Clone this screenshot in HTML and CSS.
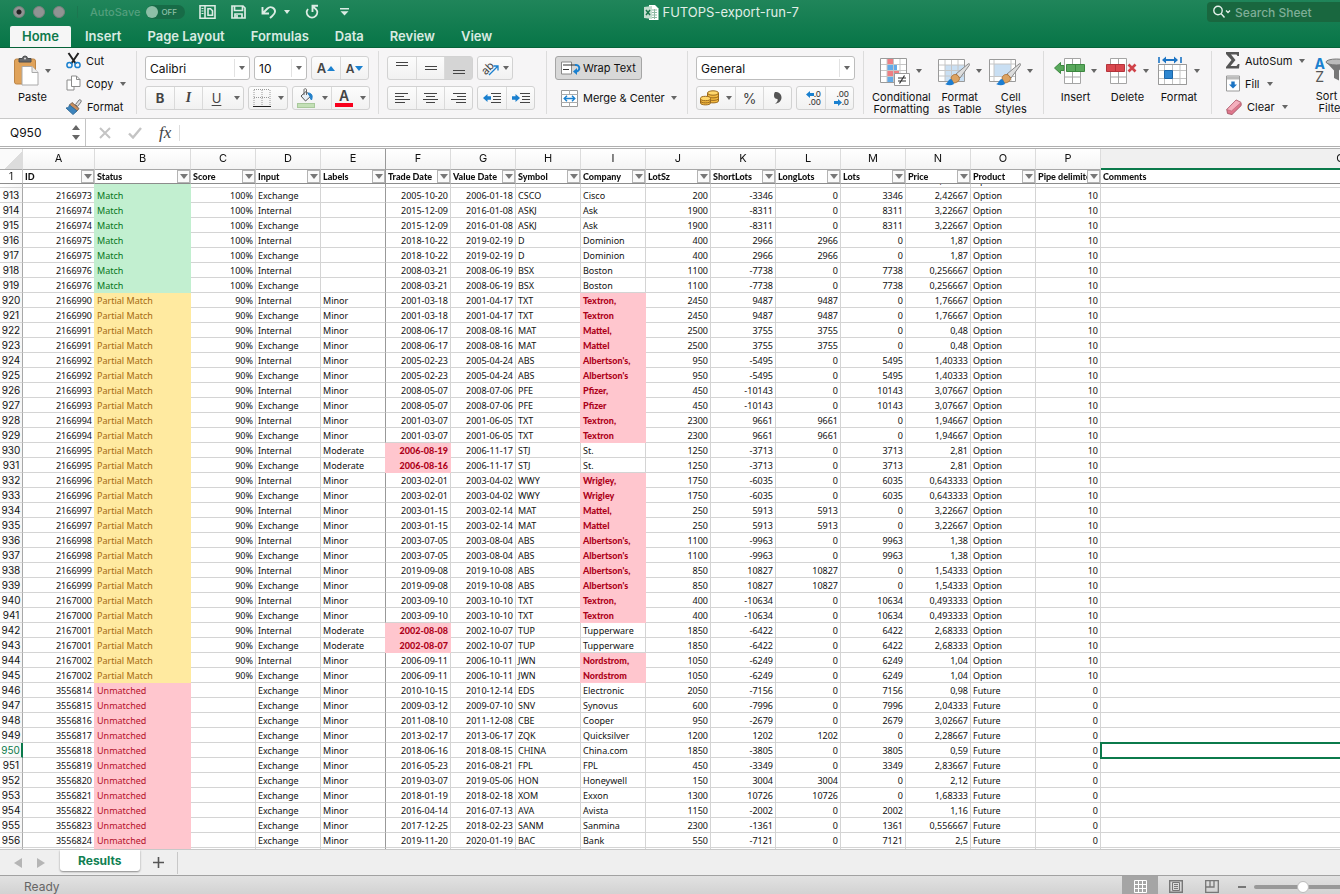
FILE: index.html
```html
<!DOCTYPE html>
<html lang="en">
<head>
    <meta charset="UTF-8">
    <meta name="viewport" content="width=device-width, initial-scale=1.0">
    <title>FUTOPS-export-run-7</title>
    <link rel="stylesheet" href="styles.css">
</head>
<body>
    <header class="titlebar">
        <div class="window-row">
            <div class="lights"><span class="light edited"></span><span class="light"></span><span class="light"></span></div>
            <label class="autosave">AutoSave <input type="checkbox" class="toggle-input"><span class="toggle"><i></i>OFF</span></label>
            <div class="quick">
                <button aria-label="Sidebar"><svg width="17" height="16" viewBox="0 0 17 16" fill="none" stroke="#dcece4" stroke-width="1.6"><path d="M1 1.800h15v12.400H1zM6 1.800v12.400M9 4.800h2.500l2 2v4.500H9z"/><path d="M2.500 4.500h2M2.500 7h2M2.500 9.500h2" stroke-width="1"/></svg></button>
                <button aria-label="Save"><svg width="15" height="16" viewBox="0 0 15 16" fill="none" stroke="#dcece4" stroke-width="1.700"><path d="M1 2h11l2 2v10H1z"/><path d="M3.500 2v4.500h8V2M4 14v-4h7v4M6 11v3"/></svg></button>
                <button class="undo" aria-label="Undo"><svg width="16" height="16" viewBox="0 0 16 16" fill="none" stroke="#dcece4" stroke-width="1.900"><path d="M1.500 3v6.500H8M2 9l4.500-4.500c3-3 8-.5 7.500 3.500-.3 2.500-2.500 3.500-5 6"/></svg><span class="caret"></span></button>
                <button aria-label="Redo"><svg width="14" height="16" viewBox="0 0 14 16" fill="none" stroke="#dcece4" stroke-width="1.900"><path d="M3 5a5.200 5.200 0 1 0 8 0M13 1.800H7.500V8M8 2.300l3.500 3.500"/></svg></button>
                <button class="customize" aria-label="Customize toolbar"><svg width="9" height="8" viewBox="0 0 9 8" fill="#dcece4"><path d="M0 0h9v1.500H0zM.5 3.200h8L4.500 7.500z"/></svg></button>
            </div>
            <div class="doc-title"><svg width="15" height="15" viewBox="0 0 15 15"><path d="M5 0h6l3.500 3.500V15H5z" fill="#fff"/><path d="M8 5h5M8 7.500h5M8 10h5M8 12.500h5M10.500 4v10" stroke="#8db9a3"/><path d="M0 2l8-1v13l-8-1z" fill="#c4ddcf"/><path d="M2 5l4 5M6 5l-4 5" stroke="#187449" stroke-width="1.500"/></svg>FUTOPS-export-run-7</div>
            <div class="search">
                <svg width="20" height="14" viewBox="0 0 20 14" fill="none" stroke="#e4f0ea" stroke-width="1.400"><circle cx="6" cy="5.500" r="4.200"/><path d="M9 8.500l3.500 4M14 5.500l2 2 2-2"/></svg>
                <input type="search" placeholder="Search Sheet" aria-label="Search Sheet">
            </div>
        </div>
        <nav class="tabs">
            <a href="#" class="active">Home</a>
            <a href="#">Insert</a>
            <a href="#">Page Layout</a>
            <a href="#">Formulas</a>
            <a href="#">Data</a>
            <a href="#">Review</a>
            <a href="#">View</a>
        </nav>
    </header>

    <section class="ribbon">
        <div class="group clipboard">
            <button class="big">
                <span class="big-top"><svg width="25" height="31" viewBox="0 0 25 31"><rect x=".5" y="4" width="21" height="25" rx="2" fill="#e0a35b" stroke="#bd8546"/><path d="M5 7V3.500h3.500a2.500 2.500 0 0 1 5 0H17V7z" fill="#66686b" stroke="#4c4e50"/><circle cx="11" cy="3.500" r="1" fill="#ddd"/><path d="M8 11.500h10l6 6V30H8z" fill="#fff" stroke="#aaa"/><path d="M18 11.500v6h6" fill="#eee" stroke="#aaa"/></svg><span class="caret"></span></span>
                Paste
            </button>
            <div class="stack">
                <button class="small"><svg width="15" height="17" viewBox="0 0 15 17" fill="none"><path d="M2.500 1l7.500 11M12.500 1L5 12" stroke="#222" stroke-width="2"/><circle cx="3.500" cy="13" r="2.600" stroke="#1a80cf" stroke-width="1.500"/><circle cx="11.500" cy="13" r="2.600" stroke="#1a80cf" stroke-width="1.500"/></svg>Cut</button>
                <button class="small"><svg width="15" height="17" viewBox="0 0 15 17" fill="#fff" stroke="#8b8b8b"><path d="M1 5h7v10H1z"/><path d="M5.500 1h5l3.500 3.500v7H5.500z"/><path d="M10.500 1v3.500H14" fill="none"/></svg>Copy<span class="caret"></span></button>
                <button class="small"><svg width="16" height="16" viewBox="0 0 16 16"><path d="M9.500 5.500L13 1c1-1 3 .5 2 2l-3.500 4.500z" fill="#ddd" stroke="#777"/><path d="M6 3.500l7 6-2 2.500-7.500-6z" fill="#c98f5e" stroke="#7b6654"/><path d="M3.500 6l7.500 6-4 3.500L0 9c2 0 3-1 3.500-3z" fill="#3d84bd" stroke="#356e9b"/></svg>Format</button>
            </div>
        </div>

        <div class="group font">
            <div class="rows">
                <div class="row">
                    <label class="combo font-name"><select aria-label="Font"><option>Calibri</option></select><span class="caret"></span></label>
                    <label class="combo font-size"><select aria-label="Font size"><option>10</option></select><span class="caret"></span></label>
                    <div class="btns"><button class="cell-btn font-grow" aria-label="Increase font size"><b>A</b><i class="up"></i></button><button class="cell-btn font-shrink" aria-label="Decrease font size"><b>A</b><i class="down"></i></button></div>
                </div>
                <div class="row">
                    <div class="btns"><button class="cell-btn bold">B</button><button class="cell-btn italic">I</button><button class="cell-btn underline">U</button><button class="drop" aria-label="Underline style"><span class="caret"></span></button></div>
                    <div class="btns narrow"><button class="cell-btn" aria-label="Borders"><svg width="18" height="18" viewBox="0 0 18 18" fill="none"><path d="M1 .5h16M1 8.500h16M1 1v15M9 1v15M17 1v15" stroke="#999" stroke-dasharray="1 1"/><path d="M0 17.500h18" stroke="#222"/></svg></button><button class="drop" aria-label="Border style"><span class="caret"></span></button></div>
                    <div class="btns narrow"><button class="cell-btn" aria-label="Fill color"><svg width="20" height="20" viewBox="0 0 20 20"><path d="M5 8l5-4.500L15 8l-5.500 5z" fill="#e8eff5" stroke="#555"/><path d="M8 7V1.500c0-1 2.500-1 2.500 0V7" fill="none" stroke="#666"/><path d="M12 5c4 0 5 3 3.500 7-1.500-1-1-4-2.500-5z" fill="#2280ca" stroke="#2280ca"/><rect x="1.500" y="15.500" width="17" height="4" fill="#c3e0b6" stroke="#a9c99c"/></svg></button><button class="drop" aria-label="Fill colors"><span class="caret"></span></button><button class="cell-btn font-color" aria-label="Font color">A</button><button class="drop" aria-label="Font colors"><span class="caret"></span></button></div>
                </div>
            </div>
        </div>

        <div class="group alignment">
            <div class="rows">
                <div class="row">
                    <div class="btns">
                        <button class="cell-btn" aria-label="Top align"><svg width="12" height="16" viewBox="0 0 12 16" stroke="#444"><path d="M0 2.500h12M0 5.500h12"/></svg></button>
                        <button class="cell-btn" aria-label="Middle align"><svg width="12" height="16" viewBox="0 0 12 16" stroke="#444"><path d="M0 6.500h12M0 9.500h12"/></svg></button>
                        <button class="cell-btn pressed" aria-label="Bottom align"><svg width="12" height="16" viewBox="0 0 12 16" stroke="#444"><path d="M0 10.500h12M0 13.500h12"/></svg></button>
                    </div>
                    <div class="btns"><button class="cell-btn orient" aria-label="Orientation"><span class="ab">ab</span><svg width="11" height="11" viewBox="0 0 11 11" fill="none" stroke="#1a80cf" stroke-width="1.300"><path d="M1 10l9-9M5.500 1H10v4.500"/></svg><span class="caret"></span></button></div>
                </div>
                <div class="row">
                    <div class="btns">
                        <button class="cell-btn" aria-label="Align left"><svg width="15" height="13" viewBox="0 0 15 13" stroke="#444"><path d="M0 1.500h13M0 4.500h9M0 7.500h15M0 10.500h10"/></svg></button>
                        <button class="cell-btn" aria-label="Center"><svg width="15" height="13" viewBox="0 0 15 13" stroke="#444"><path d="M1 1.500h13M3 4.500h9M0 7.500h15M3 10.500h9"/></svg></button>
                        <button class="cell-btn" aria-label="Align right"><svg width="15" height="13" viewBox="0 0 15 13" stroke="#444"><path d="M2 1.500h13M6 4.500h9M0 7.500h15M5 10.500h10"/></svg></button>
                    </div>
                    <div class="btns">
                        <button class="cell-btn" aria-label="Decrease indent"><svg width="18" height="13" viewBox="0 0 18 13"><path d="M8 1.500h10M10 4.500h8M10 7.500h8M8 10.500h10" stroke="#444"/><path d="M0 6l4.500-4v2.300H8v3.400H4.500V10z" fill="#1a80cf"/></svg></button>
                        <button class="cell-btn" aria-label="Increase indent"><svg width="18" height="13" viewBox="0 0 18 13"><path d="M8 1.500h10M10 4.500h8M10 7.500h8M8 10.500h10" stroke="#444"/><path d="M8 6L3.500 2v2.300H0v3.400h3.500V10z" fill="#1a80cf"/></svg></button>
                    </div>
                </div>
            </div>
        </div>

        <div class="group wrapping">
            <div class="rows">
                <div class="row"><button class="wide pressed-box"><svg width="20" height="14" viewBox="0 0 20 14" fill="none"><path d="M.5 1h10v12H.5z" fill="#fff" stroke="#888"/><path d="M2 4h13M2 8.500h6" stroke="#333"/><path d="M14 4c5-1 6 6 1 6.500" stroke="#1a80cf" stroke-width="2"/><path d="M16 7v7l-4-3.500z" fill="#1a80cf"/></svg>Wrap Text</button></div>
                <div class="row"><button class="wide"><svg width="17" height="17" viewBox="0 0 17 17" fill="none"><path d="M.5.5h16v16H.5z" fill="#fff" stroke="#999"/><path d="M0 4.500h17M0 12.500h17M8.500 0v4M8.500 13v4" stroke="#aaa"/><path d="M3 8.500h11M6 5.800L3.200 8.500 6 11.200M11 5.800l2.800 2.700-2.800 2.700" stroke="#1a80cf" stroke-width="1.400"/></svg>Merge &amp; Center<span class="caret"></span></button></div>
            </div>
        </div>

        <div class="group number">
            <div class="rows">
                <div class="row"><label class="combo number-format"><select aria-label="Number format"><option>General</option></select><span class="caret"></span></label></div>
                <div class="row">
                    <div class="btns"><button class="cell-btn coins" aria-label="Currency"><svg width="19" height="16" viewBox="0 0 19 16" fill="#f3b93e" stroke="#9b6a1d"><path d="M7.500 3v8c0 2.500 11 2.500 11 0V3"/><path d="M7.500 6c0 2.500 11 2.500 11 0M7.500 8.500c0 2.500 11 2.500 11 0" fill="none"/><ellipse cx="13" cy="3" rx="5.500" ry="2.200" fill="#ffd76c"/><path d="M.5 8.500v4.500c0 2.500 10 2.500 10 0V8.500"/><path d="M.5 11c0 2.500 10 2.500 10 0" fill="none"/><ellipse cx="5.500" cy="8.500" rx="5" ry="2.200" fill="#ffd76c"/></svg></button><button class="drop" aria-label="Currencies"><span class="caret"></span></button><button class="cell-btn percent">%</button><button class="cell-btn" aria-label="Comma style"><svg width="8" height="12" viewBox="0 0 8 12" fill="#555"><path d="M1 0c4 0 6.500 2 6.500 5.500C7.500 9 5 11 1 12c2.500-2 3-3.500 2.500-5C1 7 0 5.500 0 3.500 0 2 .3 1 1 0z"/></svg></button></div>
                    <div class="btns">
                        <button class="cell-btn decimals" aria-label="Increase decimal"><span><svg width="8" height="7" viewBox="0 0 8 7"><path d="M0 3.500L4 0v2h4v3H4v2z" fill="#1a80cf"/></svg>.0</span><span>.00</span></button>
                        <button class="cell-btn decimals" aria-label="Decrease decimal"><span>.00</span><span><svg width="8" height="7" viewBox="0 0 8 7"><path d="M8 3.500L4 0v2H0v3h4v2z" fill="#1a80cf"/></svg>.0</span></button>
                    </div>
                </div>
            </div>
        </div>

        <div class="group styles">
            <button class="big">
                <span class="big-top"><svg width="30" height="31" viewBox="0 0 30 31"><path d="M.5 3.500h26v24H.5z" fill="#fff"/><path d="M7 4h6v5H7zM7 15h12v6H7z" fill="#ee7f83"/><path d="M7 9h10v6H7zM7 21h6v6H7z" fill="#64abe8"/><path d="M.5 9.500h26M.5 15.500h26M.5 21.500h26M7 3.500v24M13.500 3.500v24M20 3.500v24" stroke="#c6c6c6" fill="none"/><path d="M.5 3.500h26v24H.5z" fill="none" stroke="#9a9a9a"/><path d="M14.500 18.500h15v12h-15z" fill="#fff" stroke="#999"/><path d="M18 23h8M18 26h8M24.500 20.500l-5 8" stroke="#333" stroke-width="1.200"/></svg><span class="caret"></span></span>
                Conditional<br>Formatting
            </button>
            <button class="big">
                <span class="big-top"><svg width="32" height="31" viewBox="0 0 32 31"><path d="M.5 4.500h26v22H.5z" fill="#fff"/><path d="M7 10h20v17H7z" fill="#c9dff3"/><path d="M.5 10h26M.5 15.500h26M.5 21h26M7 4.500v22M13.500 4.500v22M20 4.500v22" stroke="#c6c6c6" fill="none"/><path d="M.5 4.500h26v22H.5z" fill="none" stroke="#9a9a9a"/><path d="M18 19L30 9c1.500-.8 2 0 1.400 1.200L22 23z" fill="#ddd" stroke="#888"/><path d="M13 23c1-4 6-5 8-1s-3 6-6 6z" fill="#dca362" stroke="#b0763a"/><path d="M7 29c3-.5 3-5 6-5 1 1 2 2 3 5-3 2-6 1.500-9 0z" fill="#1c7dd1"/></svg><span class="caret"></span></span>
                Format<br>as Table
            </button>
            <button class="big">
                <span class="big-top"><svg width="32" height="31" viewBox="0 0 32 31"><path d="M.5 4.500h26v22H.5z" fill="#fff"/><path d="M5 9h17v12H5z" fill="#c9dff3"/><path d="M.5 9h26M.5 21.500h26M5 4.500v22M22 4.500v22" stroke="#c6c6c6" fill="none"/><path d="M.5 4.500h26v22H.5z" fill="none" stroke="#9a9a9a"/><path d="M18 19L30 9c1.500-.8 2 0 1.400 1.200L22 23z" fill="#ddd" stroke="#888"/><path d="M13 23c1-4 6-5 8-1s-3 6-6 6z" fill="#dca362" stroke="#b0763a"/><path d="M7 29c3-.5 3-5 6-5 1 1 2 2 3 5-3 2-6 1.500-9 0z" fill="#1c7dd1"/></svg><span class="caret"></span></span>
                Cell<br>Styles
            </button>
        </div>

        <div class="group cells">
            <button class="big">
                <span class="big-top"><svg width="31" height="31" viewBox="0 0 31 31"><path d="M10.500 3.500h16v25h-16zM10.500 22h16M18.500 3.500v25" fill="#fff" stroke="#a5a5a5"/><path d="M12.500 9.500h18v7h-18z" fill="#59a85c" stroke="#3c8840"/><path d="M21.500 10v7" stroke="#3c8840"/><path d="M.5 13l6-5.500v3H10v5H6.500v3z" fill="#59a85c" stroke="#3c8840"/></svg><span class="caret"></span></span>
                Insert
            </button>
            <button class="big">
                <span class="big-top"><svg width="31" height="31" viewBox="0 0 31 31"><path d="M4.500 3.500h16v25h-16zM4.500 22h16M12.500 3.500v25" fill="#fff" stroke="#a5a5a5"/><path d="M.5 9.500h18v7H.5z" fill="#d9474e" stroke="#b5343b"/><path d="M9.500 10v7" stroke="#b5343b"/><path d="M22.500 9.500l7 7M29.500 9.500l-7 7" stroke="#d04249" stroke-width="2.600"/></svg><span class="caret"></span></span>
                Delete
            </button>
            <button class="big">
                <span class="big-top"><svg width="30" height="31" viewBox="0 0 30 31"><path d="M.5 9.500h28v20H.5zM.5 15.500h28M.5 23.500h28M6.500 9.500v20M14.500 9.500v20M22 9.500v20" fill="#fff" stroke="#c3c3c3"/><path d="M.5 9.500h28v20H.5z" fill="none" stroke="#999"/><path d="M6.500 15.500h8v8h-8z" fill="#2e86d0" stroke="#1c66a8"/><path d="M1 2v6M23 2v6" stroke="#1c74c4" stroke-width="1.600"/><path d="M6 5h12" stroke="#1c74c4" stroke-width="2"/><path d="M4 5l4-3.500v7zM20 5l-4-3.500v7z" fill="#1c74c4"/></svg><span class="caret"></span></span>
                Format
            </button>
        </div>

        <div class="group editing">
            <div class="stack">
                <button class="small"><svg width="14" height="17" viewBox="0 0 14 17"><path d="M0 0h13v4h-1.500L10.500 2.500H5l4.500 5.500L4.500 14h6l1.500-2h1.500l-.5 4.500H0V15l5.500-7L0 2z" fill="#555"/></svg>AutoSum<span class="caret"></span></button>
                <button class="small"><svg width="14" height="17" viewBox="0 0 14 17"><path d="M.5 1h13v15H.5z" fill="#fff" stroke="#999"/><path d="M1 1.500h12v3H1z" fill="#bbb"/><path d="M7 13.500l-4-4h2.300v-3h3.400v3H11z" fill="#1c74c4"/></svg>Fill<span class="caret"></span></button>
                <button class="small"><svg width="16" height="16" viewBox="0 0 16 16"><path d="M.8 10.500L10 1l5 2.500.2 3L6 15.500l-4.500-1z" fill="#e0768c" stroke="#a85a6a"/><path d="M.8 10.500L10 1l5 2.500L5.500 12z" fill="#f5afbd" stroke="#b96a79" stroke-width=".7"/></svg>Clear<span class="caret"></span></button>
            </div>
            <button class="big sort">
                <span class="big-top"><span class="az"><b>A</b>Z</span><svg width="24" height="24" viewBox="0 0 24 24"><path d="M1 4l8 8.500V20l5 2.500v-10L22 4z" fill="#777"/><ellipse cx="11.500" cy="4" rx="10.500" ry="3" fill="#bbb" stroke="#777"/></svg></span>
                Sort &amp;<br>Filter
            </button>
        </div>
    </section>

    <section class="formula-bar">
        <div class="name-box"><input type="text" value="Q950" aria-label="Name box"><span class="stepper"><i class="up"></i><i class="down"></i></span></div>
        <button aria-label="Cancel"><svg width="12" height="12" viewBox="0 0 12 12" fill="none" stroke="#c4c4c4" stroke-width="2"><path d="M1 1l10 10M11 1L1 11"/></svg></button>
        <button aria-label="Enter"><svg width="14" height="12" viewBox="0 0 14 12" fill="none" stroke="#c4c4c4" stroke-width="2.400"><path d="M1 6.500l4 4L13 1"/></svg></button>
        <button class="fx" aria-label="Insert function">fx</button>
        <input class="formula" type="text" aria-label="Formula">
    </section>

    <main class="sheet" id="sheet">
        <table>
            <colgroup><col class="c-num"><col class="c-id"><col class="c-status"><col span="14"><col class="c-comments"></colgroup>
            <thead>
                <tr class="letters" id="letters"></tr>
                <tr class="names" id="names"></tr>
            </thead>
            <tbody id="rows"></tbody>
        </table>
    </main>

    <nav class="sheet-tabs">
        <button aria-label="Previous sheet"><svg width="8" height="10" viewBox="0 0 8 10" fill="#b5b5b5"><path d="M8 0v10L0 5z"/></svg></button>
        <button aria-label="Next sheet"><svg width="8" height="10" viewBox="0 0 8 10" fill="#b5b5b5"><path d="M0 0v10l8-5z"/></svg></button>
        <a href="#" class="sheet-tab">Results</a>
        <button class="add" aria-label="Add sheet"><svg width="11" height="11" viewBox="0 0 11 11" stroke="#555" stroke-width="1.600"><path d="M5.500 0v11M0 5.500h11"/></svg></button>
    </nav>

    <footer class="status-bar">
        <span class="ready">Ready</span>
        <button class="view on" aria-label="Normal view"><svg width="13" height="13" viewBox="0 0 13 13" fill="none" stroke="#fff"><path d="M.5.500h12v12H.5zM0 4.500h13M0 8.500h13M4.500 0v13M8.500 0v13"/></svg></button>
        <button class="view" aria-label="Page layout view"><svg width="14" height="13" viewBox="0 0 14 13" fill="none" stroke="#777"><path d="M.7.700h12.600v11.600H.7z" stroke-width="1.400"/><path d="M3.500 2.500h7v8h-7zM5 4.500h4M5 6.500h4M5 8.500h4"/></svg></button>
        <button class="view" aria-label="Page break view"><svg width="14" height="13" viewBox="0 0 14 13" fill="none" stroke="#777" stroke-width="1.300"><path d="M.7.700h12.600v11.600H.7zM1 7h8V1M5 1v6"/></svg></button>
        <button class="minus" aria-label="Zoom out"></button>
        <input type="range" class="zoom" min="0" max="100" value="50" aria-label="Zoom">
    </footer>

    <script src="script.js"></script>
</body>
</html>
```
FILE: styles.css
```css
* {
    box-sizing: border-box;
}

body {
    margin: 0;
    height: 100vh;
    display: flex;
    flex-direction: column;
    overflow: hidden;
    font-family: Inter, sans-serif;
    font-size: 11px;
    color: #111;
    background: #fff;
}

button, input, select {
    font: inherit;
    color: inherit;
    border: none;
    background: none;
    padding: 0;
    margin: 0;
    outline: none;
}

a {
    text-decoration: none;
}

svg {
    display: block;
    flex: none;
}

.caret {
    flex: none;
    border: 3px solid transparent;
    border-top: 4px solid #666;
    border-bottom: none;
}

.up, .down {
    border: 4px solid transparent;
}

.up {
    border-top: none;
    border-bottom: 5px solid #666;
}

.down {
    border-bottom: none;
    border-top: 5px solid #666;
}

/* title bar */
.titlebar {
    flex: none;
    background: linear-gradient(#20855a, #077547);
    border-bottom: 1px solid #066339;
    color: #e0eee7;
}

.window-row {
    display: flex;
    align-items: center;
    height: 24px;
}

.lights {
    display: flex;
    gap: 8px;
    padding: 0 12px 0 13px;
    border-right: 1px solid #1c7650;
}

.light {
    width: 12px;
    height: 12px;
    border-radius: 50%;
    background: #919493;
    border: 1px solid #7c7f7e;
}

.edited {
    background: radial-gradient(#222 0 2px, #919493 3px);
}

.autosave {
    display: flex;
    align-items: center;
    gap: 6px;
    padding-left: 12px;
    color: #539f7d;
    font-size: 11px;
    font-weight: 500;
}

.toggle-input {
    position: absolute;
    opacity: 0;
}

.toggle {
    display: flex;
    align-items: center;
    gap: 3px;
    width: 39px;
    height: 14px;
    border-radius: 7px;
    background: #176b47;
    color: #8fc0a9;
    font-size: 8px;
}

.toggle i {
    width: 12px;
    height: 12px;
    border-radius: 50%;
    background: #8dbfa7;
}

.quick {
    display: flex;
    align-items: center;
    gap: 15px;
    padding-left: 14px;
}

.undo {
    display: flex;
    align-items: center;
    gap: 7px;
}

.quick .caret {
    border-top-color: #dcece4;
}

.customize {
    padding-left: 6px;
}

.doc-title {
    flex: 1;
    display: flex;
    align-items: center;
    justify-content: center;
    gap: 4px;
    padding-right: 114px;
    font-size: 13px;
}

.search {
    display: flex;
    align-items: center;
    gap: 3px;
    width: 133px;
    height: 20px;
    padding-left: 5px;
    border-radius: 4px 0 0 4px;
    background: #19673f;
}

.search input {
    width: 100px;
    font-size: 12px;
    font-weight: 500;
}

.search input::placeholder {
    color: #7fae97;
}

.tabs {
    display: flex;
    gap: 2px;
    padding: 2px 10px 0;
}

.tabs a {
    padding: 0 12px;
    font-size: 13px;
    line-height: 21px;
    font-weight: 600;
    color: #d9ebe2;
}

.tabs .active {
    background: #f6f6f6;
    color: #0e7a4b;
    border-radius: 2px 2px 0 0;
}

/* ribbon */
.ribbon {
    flex: none;
    display: flex;
    height: 71px;
    overflow: hidden;
    padding: 3px 0 4px;
    background: #f6f5f6;
    border-bottom: 1px solid #c8c8c8;
}

.group {
    flex: none;
    display: flex;
    padding: 5px 8px 0;
    border-right: 1px solid #dcdcdc;
}

.rows {
    display: flex;
    flex-direction: column;
    gap: 6px;
}

.row, .btns {
    display: flex;
}

.row {
    gap: 4px;
}

.btns {
    height: 24px;
    border: 1px solid #d2d2d2;
    border-radius: 3px;
    background: linear-gradient(#fcfcfc, #f1f1f1);
}

.cell-btn {
    display: flex;
    align-items: center;
    justify-content: center;
    width: 28px;
    color: #444;
}

.narrow .cell-btn, .coins {
    width: 25px;
}

.cell-btn + .cell-btn, .drop + .cell-btn {
    border-left: 1px solid #dadada;
}

.drop {
    display: flex;
    align-items: center;
    justify-content: center;
    width: 13px;
}

.combo {
    display: flex;
    align-items: center;
    height: 24px;
    padding-right: 4px;
    background: #fff;
    border: 1px solid #bdbdbd;
    border-radius: 3px;
}

.combo select {
    appearance: none;
    flex: 1;
    min-width: 0;
    height: 18px;
    margin-right: 4px;
    padding-left: 4px;
    border-right: 1px solid #e2e2e2;
    font-size: 12px;
}

.font-name {
    width: 105px;
}

.font-size {
    width: 53px;
}

.number-format {
    width: 159px;
}

.font-grow, .font-shrink {
    gap: 1px;
    font-size: 13px;
}

.font-shrink {
    font-size: 12px;
}

.font-grow b, .font-shrink b {
    font-weight: 600;
}

.font-grow .up {
    border-bottom-color: #1a80cf;
}

.font-shrink .down {
    border-top-color: #1a80cf;
}

.bold {
    font-size: 13px;
    font-weight: 700;
}

.italic {
    font: italic bold 14px "Liberation Serif", serif;
}

.underline {
    font-size: 13px;
    text-decoration: underline;
    text-underline-offset: 2px;
}

.font-color {
    font-size: 14px;
    line-height: 14px;
    font-weight: 600;
    background: linear-gradient(#f8001c, #f8001c) center 16px / 18px 4px no-repeat;
    padding-bottom: 5px;
}

.pressed {
    background: #d5d5d5;
}

.orient {
    width: 34px;
}

.ab {
    transform: rotate(-45deg);
    font-size: 11px;
}

.orient svg {
    margin: 5px 4px 0 -6px;
}

.wide {
    display: flex;
    align-items: center;
    gap: 5px;
    height: 24px;
    padding: 0 5px;
    border: 1px solid transparent;
    border-radius: 3px;
    white-space: nowrap;
}

.wide .caret {
    margin-left: 1px;
}

.pressed-box {
    gap: 2px;
    background: #d8d8d8;
    border-color: #a5a5a5;
}

.percent {
    font-size: 14px;
}

.decimals {
    flex-direction: column;
    align-items: flex-end;
    padding-right: 4px;
    font-size: 8px;
    line-height: 8px;
    font-weight: 500;
}

.decimals span {
    display: flex;
    align-items: center;
}

.big {
    display: flex;
    flex-direction: column;
    align-items: center;
    line-height: 12px;
    text-align: center;
    padding-top: 4px;
}

.big-top {
    display: flex;
    align-items: center;
    gap: 6px;
    height: 31px;
    margin-bottom: 5px;
}

.stack {
    display: flex;
    flex-direction: column;
    margin-top: -2px;
}

.small {
    flex: none;
    display: flex;
    align-items: center;
    gap: 5px;
    height: 23px;
}

.small .caret {
    margin-left: 2px;
}

.clipboard {
    width: 137px;
    gap: 15px;
    padding: 0 0 0 14px;
}

.alignment {
    width: 168px;
}

.wrapping {
    width: 141px;
}

.number {
    width: 176px;
}

.styles {
    width: 180px;
    gap: 7px;
    padding: 0 0 0 8px;
}

.cells {
    width: 168px;
    gap: 9px;
    padding: 0 0 0 10px;
}

.editing {
    gap: 9px;
    padding: 0 0 0 14px;
    border: none;
}

.sort .big-top {
    gap: 0;
}

.az {
    display: flex;
    flex-direction: column;
    font-size: 14px;
    line-height: 13px;
    color: #555;
}

.az b {
    color: #1a80cf;
}

/* formula bar */
.formula-bar {
    flex: none;
    display: flex;
    align-items: center;
    height: 30px;
    border-bottom: 3px double #b0b0b0;
}

.name-box {
    display: flex;
    align-items: center;
    width: 86px;
    height: 100%;
    padding: 0 5px 0 10px;
    margin-right: 13px;
    border-right: 1px solid #c4c4c4;
}

.name-box input {
    flex: 1;
    min-width: 0;
    font-size: 12px;
}

.stepper {
    display: flex;
    flex-direction: column;
    gap: 5px;
}

.formula-bar button {
    margin-right: 17px;
}

.formula-bar .fx {
    font: italic 17px "Liberation Serif", serif;
    color: #444;
    margin-right: 8px;
}

.formula {
    flex: 1;
    height: 16px;
    border-left: 1px solid #ddd;
}

/* sheet */
.sheet {
    flex: 1;
    min-height: 0;
    overflow: hidden;
    font-family: "Noto Sans", sans-serif;
    font-size: 9px;
}

.sheet table {
    table-layout: fixed;
    width: 1581px;
    border-collapse: separate;
    border-spacing: 0;
}

.c-num {
    width: 23px;
}

.c-id {
    width: 72px;
}

.c-status {
    width: 96px;
}

.c-comments {
    width: 480px;
}

.sheet thead {
    position: sticky;
    top: 0;
    z-index: 2;
}

.sheet th, .sheet td {
    height: 15px;
    padding: 1px 2px 0;
    overflow: hidden;
    white-space: nowrap;
    line-height: 13px;
    border-right: 1px solid #d4d4d4;
    border-bottom: 1px solid #d4d4d4;
}

.sheet .letters th {
    height: 21px;
    padding: 0 0 2px;
    background: linear-gradient(#fff, #f4f4f4);
    border-color: #dcdcdc;
    border-bottom-color: #a8a8a8;
    font: 11px Inter, sans-serif;
    text-align: center;
}

.sheet .letters .active-col {
    background: #f0f0f0;
    border-bottom: 2px solid #0b7a4b;
}

.sheet .letters th:first-child {
    background: linear-gradient(135deg, #fafafa 58%, #dcdcdc 58%);
}

.sheet .names th {
    height: 14px;
    line-height: 13px;
    background: #fff;
    border-color: #c4c4c4;
    border-bottom-color: #8c8c8c;
    text-align: left;
    font-family: Lato, sans-serif;
    font-size: 9px;
    font-weight: 900;
    padding: 0 0 0 2px;
}

.filter {
    display: flex;
    align-items: center;
    height: 13px;
}

.filter span {
    flex: 1;
    overflow: hidden;
}

.filter button {
    display: flex;
    align-items: center;
    justify-content: center;
    width: 13px;
    height: 13px;
    background: #fafafa;
    border: 1px solid #b4b4b4;
}

.filter .caret {
    border-width: 5px 4px 0;
    border-top-color: #777;
}

.sheet .rownum {
    padding: 0;
    font: 10px Inter, sans-serif;
    line-height: 14px;
    text-align: center;
    background: linear-gradient(90deg, #fff, #f6f6f6);
    border-right-color: #a8a8a8;
}

.sheet .names .rownum {
    line-height: 13px;
    text-align: center;
    font-family: Inter, sans-serif;
    font-size: 10px;
    font-weight: 400;
    padding: 0;
}

.sheet tr > :nth-child(6) {
    border-right-color: #999;
}

.sheet .num {
    text-align: right;
}

.sheet .match {
    background: #c2efd0;
    color: #067620;
    border-color: #c2efd0;
    box-shadow: -1px 0 #c2efd0;
}

.sheet .partial {
    background: #ffeaa0;
    color: #a5690f;
    border-color: #ffeaa0;
    box-shadow: -1px 0 #ffeaa0;
}

.sheet .unmatched, .sheet .diff {
    background: #ffc6ce;
    color: #b5122b;
    border-color: #ffc6ce;
    box-shadow: -1px 0 #ffc6ce;
}

.sheet .diff {
    color: #ad0018;
    font-family: Lato, sans-serif;
    font-weight: 900;
}

.sheet .selected {
    position: relative;
    outline: 2px solid #0b7a4b;
    outline-offset: -1px;
}

.sheet .current {
    color: #0b7a4b;
    border-right: 2px solid #0b7a4b;
}

/* sheet tabs */
.sheet-tabs {
    flex: none;
    display: flex;
    align-items: center;
    height: 26px;
    padding-left: 14px;
    background: #efefef;
    border-top: 1px solid #c8c8c8;
}

.sheet-tabs button {
    margin-right: 15px;
}

.sheet-tab {
    align-self: flex-start;
    padding: 0 18px;
    background: #fff;
    border-radius: 0 0 3px 3px;
    box-shadow: 0 1px 2px #888;
    color: #108052;
    font-size: 12px;
    font-weight: 700;
    line-height: 21px;
}

.sheet-tabs .add {
    height: 22px;
    margin: 0;
    padding: 0 13px;
    border-right: 1px solid #c8c8c8;
}

/* status bar */
.status-bar {
    flex: none;
    display: flex;
    align-items: stretch;
    height: 19px;
    border-top: 1px solid #a2a2a2;
    background: linear-gradient(#e2e2e2, #d2d2d2);
    overflow: hidden;
}

.ready {
    flex: 1;
    padding-left: 24px;
    font-size: 12px;
    line-height: 22px;
    color: #666;
}

.view {
    display: flex;
    justify-content: center;
    width: 36px;
    padding-top: 4px;
}

.on {
    background: #a5a5a5;
}

.minus {
    width: 8px;
    height: 2px;
    margin: 10px 8px 0 8px;
    background: #777;
}

.zoom {
    appearance: none;
    width: 98px;
    height: 4px;
    margin: 9px -12px 0 0;
    border-radius: 2px;
    background: #999;
}

.zoom::-webkit-slider-thumb {
    appearance: none;
    width: 12px;
    height: 12px;
    border-radius: 50%;
    background: #fff;
    border: 1px solid #bbb;
}
```
FILE: script.js
```js
const columns = ['ID', 'Status', 'Score', 'Input', 'Labels', 'Trade Date', 'Value Date', 'Symbol', 'Company',
    'LotSz', 'ShortLots', 'LongLots', 'Lots', 'Price', 'Product', 'Pipe delimited', 'Comments'];

// id | status | input | label | trade | value | symbol | company | lot size | short | long | lots | price
const data = `
2166973|M|I||2005-10-20|2006-01-18|CSCO|Cisco|200|-3346|0|3346|2,42667
2166973|M|E||2005-10-20|2006-01-18|CSCO|Cisco|200|-3346|0|3346|2,42667
2166974|M|I||2015-12-09|2016-01-08|ASKJ|Ask|1900|-8311|0|8311|3,22667
2166974|M|E||2015-12-09|2016-01-08|ASKJ|Ask|1900|-8311|0|8311|3,22667
2166975|M|I||2018-10-22|2019-02-19|D|Dominion|400|2966|2966|0|1,87
2166975|M|E||2018-10-22|2019-02-19|D|Dominion|400|2966|2966|0|1,87
2166976|M|I||2008-03-21|2008-06-19|BSX|Boston|1100|-7738|0|7738|0,256667
2166976|M|E||2008-03-21|2008-06-19|BSX|Boston|1100|-7738|0|7738|0,256667
2166990|P|I|Minor|2001-03-18|2001-04-17|TXT|Textron,|2450|9487|9487|0|1,76667
2166990|P|E|Minor|2001-03-18|2001-04-17|TXT|Textron|2450|9487|9487|0|1,76667
2166991|P|I|Minor|2008-06-17|2008-08-16|MAT|Mattel,|2500|3755|3755|0|0,48
2166991|P|E|Minor|2008-06-17|2008-08-16|MAT|Mattel|2500|3755|3755|0|0,48
2166992|P|I|Minor|2005-02-23|2005-04-24|ABS|Albertson's,|950|-5495|0|5495|1,40333
2166992|P|E|Minor|2005-02-23|2005-04-24|ABS|Albertson's|950|-5495|0|5495|1,40333
2166993|P|I|Minor|2008-05-07|2008-07-06|PFE|Pfizer,|450|-10143|0|10143|3,07667
2166993|P|E|Minor|2008-05-07|2008-07-06|PFE|Pfizer|450|-10143|0|10143|3,07667
2166994|P|I|Minor|2001-03-07|2001-06-05|TXT|Textron,|2300|9661|9661|0|1,94667
2166994|P|E|Minor|2001-03-07|2001-06-05|TXT|Textron|2300|9661|9661|0|1,94667
2166995|P|I|Moderate|2006-08-19|2006-11-17|STJ|St.|1250|-3713|0|3713|2,81
2166995|P|E|Moderate|2006-08-16|2006-11-17|STJ|St.|1250|-3713|0|3713|2,81
2166996|P|I|Minor|2003-02-01|2003-04-02|WWY|Wrigley,|1750|-6035|0|6035|0,643333
2166996|P|E|Minor|2003-02-01|2003-04-02|WWY|Wrigley|1750|-6035|0|6035|0,643333
2166997|P|I|Minor|2003-01-15|2003-02-14|MAT|Mattel,|250|5913|5913|0|3,22667
2166997|P|E|Minor|2003-01-15|2003-02-14|MAT|Mattel|250|5913|5913|0|3,22667
2166998|P|I|Minor|2003-07-05|2003-08-04|ABS|Albertson's,|1100|-9963|0|9963|1,38
2166998|P|E|Minor|2003-07-05|2003-08-04|ABS|Albertson's|1100|-9963|0|9963|1,38
2166999|P|I|Minor|2019-09-08|2019-10-08|ABS|Albertson's,|850|10827|10827|0|1,54333
2166999|P|E|Minor|2019-09-08|2019-10-08|ABS|Albertson's|850|10827|10827|0|1,54333
2167000|P|I|Minor|2003-09-10|2003-10-10|TXT|Textron,|400|-10634|0|10634|0,493333
2167000|P|E|Minor|2003-09-10|2003-10-10|TXT|Textron|400|-10634|0|10634|0,493333
2167001|P|I|Moderate|2002-08-08|2002-10-07|TUP|Tupperware|1850|-6422|0|6422|2,68333
2167001|P|E|Moderate|2002-08-07|2002-10-07|TUP|Tupperware|1850|-6422|0|6422|2,68333
2167002|P|I|Minor|2006-09-11|2006-10-11|JWN|Nordstrom,|1050|-6249|0|6249|1,04
2167002|P|E|Minor|2006-09-11|2006-10-11|JWN|Nordstrom|1050|-6249|0|6249|1,04
3556814|U|E|Minor|2010-10-15|2010-12-14|EDS|Electronic|2050|-7156|0|7156|0,98
3556815|U|E|Minor|2009-03-12|2009-07-10|SNV|Synovus|600|-7996|0|7996|2,04333
3556816|U|E|Minor|2011-08-10|2011-12-08|CBE|Cooper|950|-2679|0|2679|3,02667
3556817|U|E|Minor|2013-02-17|2013-06-17|ZQK|Quicksilver|1200|1202|1202|0|2,28667
3556818|U|E|Minor|2018-06-16|2018-08-15|CHINA|China.com|1850|-3805|0|3805|0,59
3556819|U|E|Minor|2016-05-23|2016-08-21|FPL|FPL|450|-3349|0|3349|2,83667
3556820|U|E|Minor|2019-03-07|2019-05-06|HON|Honeywell|150|3004|3004|0|2,12
3556821|U|E|Minor|2018-01-19|2018-02-18|XOM|Exxon|1300|10726|10726|0|1,68333
3556822|U|E|Minor|2016-04-14|2016-07-13|AVA|Avista|1150|-2002|0|2002|1,16
3556823|U|E|Minor|2017-12-25|2018-02-23|SANM|Sanmina|2300|-1361|0|1361|0,556667
3556824|U|E|Minor|2019-11-20|2020-01-19|BAC|Bank|550|-7121|0|7121|2,5
3556825|U|E|Minor|2012-05-02|2012-07-01|SLE|Sara|700|-4410|0|4410|1,12`;

const statuses = {
    M: { text: 'Match', cls: 'match', score: '100%', product: 'Option', pipe: 10 },
    P: { text: 'Partial Match', cls: 'partial', score: '90%', product: 'Option', pipe: 10 },
    U: { text: 'Unmatched', cls: 'unmatched', score: '', product: 'Future', pipe: 0 }
};
const firstRow = 912;
const currentRow = 950;

document.getElementById('letters').innerHTML = '<th></th>' + columns.map((name, i) =>
    `<th${name === 'Comments' ? ' class="active-col"' : ''}>${String.fromCharCode(65 + i)}</th>`).join('');

document.getElementById('names').innerHTML = '<th class="rownum">1</th>' + columns.map(name => {
    const button = name === 'Comments' ? '' : `<button aria-label="Filter ${name}"><i class="caret"></i></button>`;
    return `<th><div class="filter"><span>${name}</span>${button}</div></th>`;
}).join('');

document.getElementById('rows').innerHTML = data.trim().split('\n').map((line, i) => {
    const [id, code, input, label, trade, value, symbol, company, lot, short, long, lots, price] = line.split('|');
    const status = statuses[code];
    const row = firstRow + i;
    const tradeDiff = label === 'Moderate' ? ' diff' : '';
    const companyDiff = code === 'P' && label === 'Minor' ? 'diff' : '';
    return `<tr>
        <th class="rownum${row === currentRow ? ' current' : ''}">${row}</th>
        <td class="num">${id}</td>
        <td class="${status.cls}">${status.text}</td>
        <td class="num">${status.score}</td>
        <td>${input === 'I' ? 'Internal' : 'Exchange'}</td>
        <td>${label}</td>
        <td class="num${tradeDiff}">${trade}</td>
        <td class="num">${value}</td>
        <td>${symbol}</td>
        <td class="${companyDiff}">${company}</td>
        <td class="num">${lot}</td>
        <td class="num">${short}</td>
        <td class="num">${long}</td>
        <td class="num">${lots}</td>
        <td class="num">${price}</td>
        <td>${status.product}</td>
        <td class="num">${status.pipe}</td>
        <td class="${row === currentRow ? 'selected' : ''}"></td>
    </tr>`;
}).join('');

// open part-way through the first visible row
document.getElementById('sheet').scrollTop = 11;
```
